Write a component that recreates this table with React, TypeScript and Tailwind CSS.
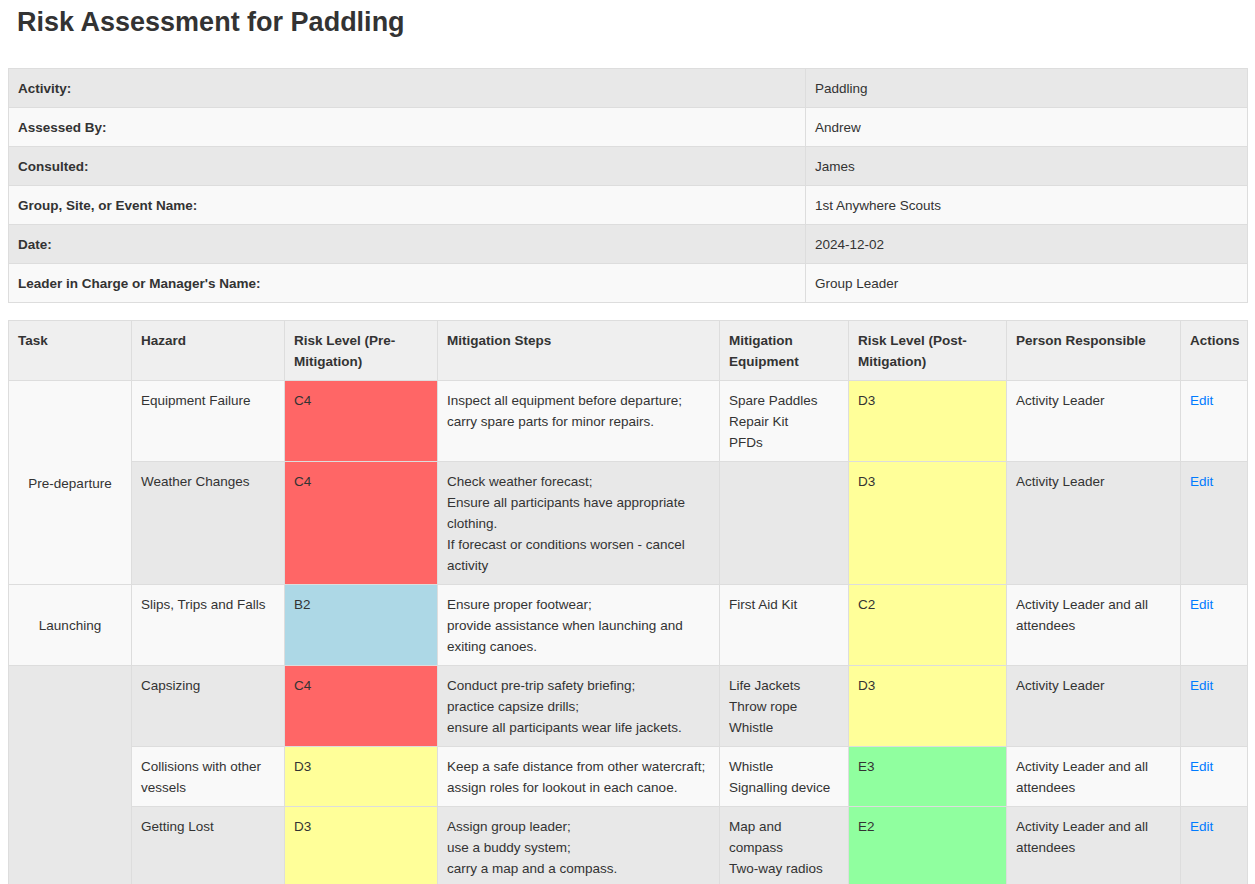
import React from "react";

const info: [string, string][] = [
  ["Activity:", "Paddling"],
  ["Assessed By:", "Andrew"],
  ["Consulted:", "James"],
  ["Group, Site, or Event Name:", "1st Anywhere Scouts"],
  ["Date:", "2024-12-02"],
  ["Leader in Charge or Manager's Name:", "Group Leader"],
];

type Row = {
  task?: { label: string; span: number };
  hazard: string;
  pre: string;
  preColor: string;
  steps: string[];
  equip: string[];
  post: string;
  postColor: string;
  person: string;
};

const RED = "bg-[#ff6666]";
const YELLOW = "bg-[#ffff99]";
const BLUE = "bg-[#add8e6]";
const GREEN = "bg-[#90ff9f]";

const rows: Row[] = [
  {
    task: { label: "Pre-departure", span: 2 },
    hazard: "Equipment Failure",
    pre: "C4",
    preColor: RED,
    steps: ["Inspect all equipment before departure;", "carry spare parts for minor repairs."],
    equip: ["Spare Paddles", "Repair Kit", "PFDs"],
    post: "D3",
    postColor: YELLOW,
    person: "Activity Leader",
  },
  {
    hazard: "Weather Changes",
    pre: "C4",
    preColor: RED,
    steps: [
      "Check weather forecast;",
      "Ensure all participants have appropriate clothing.",
      "If forecast or conditions worsen - cancel activity",
    ],
    equip: [],
    post: "D3",
    postColor: YELLOW,
    person: "Activity Leader",
  },
  {
    task: { label: "Launching", span: 1 },
    hazard: "Slips, Trips and Falls",
    pre: "B2",
    preColor: BLUE,
    steps: ["Ensure proper footwear;", "provide assistance when launching and exiting canoes."],
    equip: ["First Aid Kit"],
    post: "C2",
    postColor: YELLOW,
    person: "Activity Leader and all attendees",
  },
  {
    task: { label: "", span: 3 },
    hazard: "Capsizing",
    pre: "C4",
    preColor: RED,
    steps: [
      "Conduct pre-trip safety briefing;",
      "practice capsize drills;",
      "ensure all participants wear life jackets.",
    ],
    equip: ["Life Jackets", "Throw rope", "Whistle"],
    post: "D3",
    postColor: YELLOW,
    person: "Activity Leader",
  },
  {
    hazard: "Collisions with other vessels",
    pre: "D3",
    preColor: YELLOW,
    steps: ["Keep a safe distance from other watercraft;", "assign roles for lookout in each canoe."],
    equip: ["Whistle", "Signalling device"],
    post: "E3",
    postColor: GREEN,
    person: "Activity Leader and all attendees",
  },
  {
    hazard: "Getting Lost",
    pre: "D3",
    preColor: YELLOW,
    steps: ["Assign group leader;", "use a buddy system;", "carry a map and a compass."],
    equip: ["Map and", "compass", "Two-way radios"],
    post: "E2",
    postColor: GREEN,
    person: "Activity Leader and all attendees",
  },
];

const cell = "border border-[#dddddd] px-[9px] pt-[9px] pb-[8px] align-top text-left";

export default function App() {
  return (
    <div
      className="min-h-screen bg-white pl-2 pr-[7px] text-[#333333] text-[13.5px] leading-[21px]"
      style={{ fontFamily: '"Liberation Sans", Arial, Helvetica, sans-serif' }}
    >
      <h1 className="pt-[7px] pl-[9px] text-[27px] leading-[31px] font-bold">
        Risk Assessment for Paddling
      </h1>

      <table className="mt-[30px] w-full table-fixed border-collapse">
        <colgroup>
          <col className="w-[797px]" />
          <col />
        </colgroup>
        <tbody>
          {info.map(([k, v], i) => (
            <tr key={k} className={i % 2 === 0 ? "bg-[#e8e8e8]" : "bg-[#f9f9f9]"}>
              <td className="border border-[#dddddd] px-[9px] pt-[9px] pb-[8px] font-bold">{k}</td>
              <td className="border border-[#dddddd] px-[9px] pt-[9px] pb-[8px]">{v}</td>
            </tr>
          ))}
        </tbody>
      </table>

      <table className="mt-[17px] w-full table-fixed border-collapse">
        <colgroup>
          <col className="w-[123px]" />
          <col className="w-[153px]" />
          <col className="w-[153px]" />
          <col className="w-[282px]" />
          <col className="w-[129px]" />
          <col className="w-[158px]" />
          <col className="w-[174px]" />
          <col />
        </colgroup>
        <thead>
          <tr className="bg-[#efefef]">
            {[
              "Task",
              "Hazard",
              "Risk Level (Pre-Mitigation)",
              "Mitigation Steps",
              "Mitigation Equipment",
              "Risk Level (Post-Mitigation)",
              "Person Responsible",
              "Actions",
            ].map((h) => (
              <th key={h} className={`${cell} font-bold`}>
                {h}
              </th>
            ))}
          </tr>
        </thead>
        <tbody>
          {rows.map((r, i) => {
            const bg = i % 2 === 0 ? "bg-[#f9f9f9]" : "bg-[#e8e8e8]";
            return (
              <tr key={i} className={bg}>
                {r.task && (
                  <td
                    rowSpan={r.task.span}
                    className="border border-[#dddddd] px-[9px] pt-[9px] pb-[8px] text-center align-middle"
                  >
                    {r.task.label}
                  </td>
                )}
                <td className={cell}>{r.hazard}</td>
                <td className={`${cell} ${r.preColor}`}>{r.pre}</td>
                <td className={cell}>
                  {r.steps.map((s, j) => (
                    <div key={j}>{s}</div>
                  ))}
                </td>
                <td className={cell}>
                  {r.equip.map((s, j) => (
                    <div key={j}>{s}</div>
                  ))}
                </td>
                <td className={`${cell} ${r.postColor}`}>{r.post}</td>
                <td className={cell}>{r.person}</td>
                <td className={cell}>
                  <a href="#" className="text-[#007bff]">
                    Edit
                  </a>
                </td>
              </tr>
            );
          })}
        </tbody>
      </table>
    </div>
  );
}
